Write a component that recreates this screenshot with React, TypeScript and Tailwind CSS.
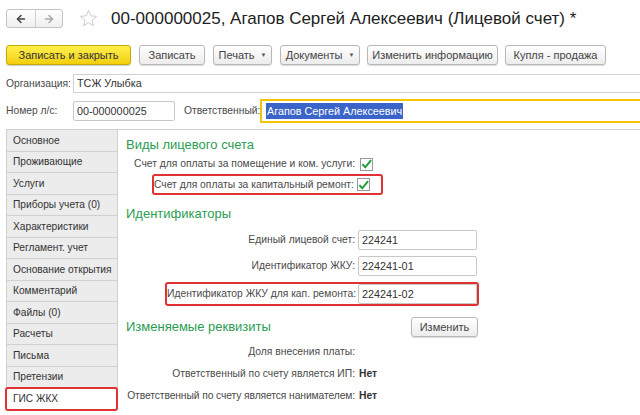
import { ArrowLeft, ArrowRight } from 'lucide-react'

const tabs = [
    'Основное',
    'Проживающие',
    'Услуги',
    'Приборы учета (0)',
    'Характеристики',
    'Регламент. учет',
    'Основание открытия',
    'Комментарий',
    'Файлы (0)',
    'Расчеты',
    'Письма',
    'Претензии',
    'ГИС ЖКХ',
]

function ToolButton({ children, arrow, w }: { children: React.ReactNode; arrow?: boolean; w: string }) {
    return (
        <div
            className={`${w} h-[20px] shrink-0 flex items-center justify-center gap-[6px] rounded-[3px] border border-[#b8b8b8] bg-gradient-to-b from-white to-[#ececec] shadow-[0_1px_1px_rgba(0,0,0,0.15)] text-[#444] whitespace-nowrap`}
        >
            {children}
            {arrow && <span className="text-[6px] text-[#555]">▼</span>}
        </div>
    )
}

function Check() {
    return (
        <div className="w-[13px] h-[13px] shrink-0 border border-[#9a9a9a] bg-white flex items-center justify-center">
            <svg width="12" height="12" viewBox="0 0 12 12">
                <path d="M1.5 6.2 L4.6 9.6 L11 1.8" fill="none" stroke="#1f9e3c" strokeWidth="2.2" />
            </svg>
        </div>
    )
}

function Field({ value, w = 'w-[119px]' }: { value: string; w?: string }) {
    return (
        <div className={`${w} h-[20px] shrink-0 border border-[#c8c8c8] rounded-[2px] bg-white flex items-center px-[3px] text-[#333] text-[10.8px]`}>
            {value}
        </div>
    )
}

export default function App() {
    return (
        <div className="w-[640px] h-[415px] overflow-hidden bg-white font-['Liberation_Sans',Arial,sans-serif] text-[10.3px] text-[#4a4a4a] whitespace-nowrap">
            {/* title */}
            <div className="flex items-center pl-[6px] pt-[9px]">
                <div className="w-[57px] h-[19px] flex border border-[#c4c4c4] rounded-[3px] bg-gradient-to-b from-white to-[#efefef]">
                    <div className="w-[29px] flex items-center justify-center border-r border-[#d0d0d0]">
                        <ArrowLeft size={12} strokeWidth={3} color="#444" />
                    </div>
                    <div className="flex-1 flex items-center justify-center">
                        <ArrowRight size={12} strokeWidth={3} color="#a8a8a8" />
                    </div>
                </div>
                <svg className="ml-[16px]" width="19" height="19" viewBox="0 0 24 24">
                    <path
                        d="M12 1.8 L14.9 8.6 L22.2 9.2 L16.6 14 L18.3 21.2 L12 17.4 L5.7 21.2 L7.4 14 L1.8 9.2 L9.1 8.6 Z"
                        fill="none"
                        stroke="#c8c8c8"
                        strokeWidth="1.2"
                        strokeLinejoin="round"
                    />
                </svg>
                <div className="ml-[13px] text-[17px] text-[#222] leading-none">
                    00-000000025, Агапов Сергей Алексеевич (Лицевой счет) *
                </div>
            </div>

            {/* toolbar */}
            <div className="flex items-center gap-[7px] pl-[6px] mt-[17px] text-[11px]">
                <div className="h-[20px] w-[125px] shrink-0 flex items-center justify-center rounded-[3px] border border-[#c9a800] bg-gradient-to-b from-[#fff04a] to-[#f2cf00] shadow-[0_1px_1px_rgba(0,0,0,0.2)] text-[#333]">
                    Записать и закрыть
                </div>
                <ToolButton w="w-[66px] ml-[1px]">Записать</ToolButton>
                <ToolButton w="w-[59px] ml-[1px]" arrow>Печать</ToolButton>
                <ToolButton w="w-[80px] ml-[1px]" arrow>Документы</ToolButton>
                <ToolButton w="w-[131px]">Изменить информацию</ToolButton>
                <ToolButton w="w-[101px]">Купля - продажа</ToolButton>
            </div>

            {/* header fields */}
            <div className="flex items-center pl-[6px] mt-[9px]">
                <div className="w-[67px] shrink-0">Организация:</div>
                <div className="flex-1 h-[19px] border-y border-l border-[#d0d0d0] flex items-center px-[3px] text-[#333] text-[10.8px]">
                    ТСЖ Улыбка
                </div>
            </div>
            <div className="flex items-center pl-[6px] mt-[6px]">
                <div className="w-[67px] shrink-0">Номер л/с:</div>
                <Field value="00-000000025" w="w-[102px]" />
                <div className="ml-[9px] w-[76px] shrink-0">Ответственный:</div>
                <div className="flex-1 h-[24px] border-y-2 border-l-2 border-[#f5c400] flex items-center pl-[4px] text-[10.8px]">
                    <span className="bg-[#3a64c8] text-white px-[1px]">Агапов Сергей Алексеевич</span>
                </div>
            </div>

            {/* body */}
            <div className="flex mt-[6px]">
                <div className="ml-[6px] w-[112px] shrink-0 flex flex-col border-l border-[#d0d0d0] text-[10.2px]">
                    {tabs.map((t, i) => (
                        <div
                            key={t}
                            className={`relative h-[21.5px] shrink-0 flex items-center pl-[6px] border-t border-r border-[#d0d0d0] text-[#333] ${
                                i === tabs.length - 1 ? 'bg-white' : 'bg-[#ececec]'
                            }`}
                        >
                            {t}
                            {i === tabs.length - 1 && (
                                <div className="absolute left-[-2px] right-[-1px] top-[-1px] bottom-[-2px] border-2 border-[#e03232] rounded-[3px]" />
                            )}
                        </div>
                    ))}
                </div>

                <div className="flex-1 min-w-0 border-t border-[#d0d0d0] pl-[8px]">
                    <div className="text-[13px] text-[#2a9d52] mt-[7px] leading-[16px]">Виды лицевого счета</div>
                    <div className="flex items-center gap-[5px] mt-[4px] h-[14px]">
                        <div className="w-[229px] text-right">Счет для оплаты за помещение и ком. услуги:</div>
                        <Check />
                    </div>
                    <div className="ml-[26px] mt-[3px] w-[231px] h-[21px] flex items-center gap-[5px] border-2 border-[#e03232] rounded-[3px]">
                        <div className="flex-1 min-w-0 text-right">Счет для оплаты за капитальный ремонт:</div>
                        <Check />
                        <div className="w-[6px] shrink-0" />
                    </div>

                    <div className="text-[13px] text-[#2a9d52] mt-[11px] leading-[16px]">Идентификаторы</div>
                    <div className="flex items-center gap-[3px] mt-[8px]">
                        <div className="w-[229px] text-right">Единый лицевой счет:</div>
                        <Field value="224241" />
                    </div>
                    <div className="flex items-center gap-[3px] mt-[6px]">
                        <div className="w-[229px] text-right">Идентификатор ЖКУ:</div>
                        <Field value="224241-01" />
                    </div>
                    <div className="ml-[39px] mt-[6px] w-[314px] h-[24px] flex items-center gap-[3px] border-2 border-[#e03232] rounded-[3px]">
                        <div className="flex-1 min-w-0 text-right">Идентификатор ЖКУ для кап. ремонта:</div>
                        <Field value="224241-02" />
                    </div>

                    <div className="flex items-center mt-[11px] h-[20px]">
                        <div className="w-[285px] text-[13px] text-[#2a9d52]">Изменяемые реквизиты</div>
                        <ToolButton w="w-[67px] text-[11px]">Изменить</ToolButton>
                    </div>
                    <div className="flex items-center gap-[4px] mt-[8px] h-[14px]">
                        <div className="w-[229px] text-right">Доля внесения платы:</div>
                    </div>
                    <div className="flex items-center gap-[4px] mt-[8px] h-[14px]">
                        <div className="w-[229px] text-right">Ответственный по счету является ИП:</div>
                        <div className="font-bold text-[#333]">Нет</div>
                    </div>
                    <div className="flex items-center gap-[4px] mt-[8px] h-[14px]">
                        <div className="w-[229px] shrink-0 text-right tracking-[-0.1px]">Ответственный по счету является нанимателем:</div>
                        <div className="font-bold text-[#333]">Нет</div>
                    </div>
                </div>
            </div>
        </div>
    )
}
